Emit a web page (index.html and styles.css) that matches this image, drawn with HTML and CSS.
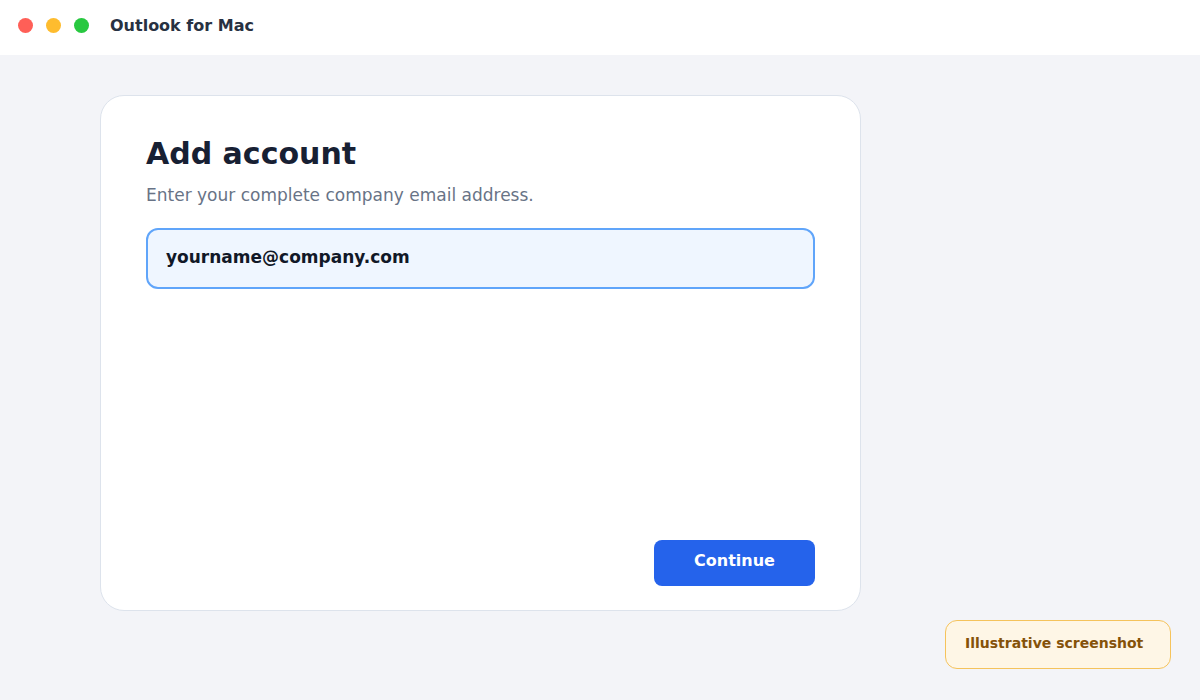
FILE: index.html
```html
<!DOCTYPE html>
<html>
<head>
<meta charset="utf-8">
<link rel="stylesheet" href="styles.css">
</head>
<body>
<header class="titlebar">
  <div class="lights">
    <span class="light red"></span>
    <span class="light yellow"></span>
    <span class="light green"></span>
  </div>
  <div class="app-title">Outlook for Mac</div>
</header>
<main class="stage">
  <section class="card">
    <h1 class="heading">Add account</h1>
    <p class="sub">Enter your complete company email address.</p>
    <div class="field">yourname@company.com</div>
    <div class="actions">
      <button class="btn">Continue</button>
    </div>
  </section>
  <div class="badge">Illustrative screenshot</div>
</main>
</body>
</html>
```

FILE: styles.css
```css
* { box-sizing: border-box; }
html, body { margin: 0; padding: 0; }
body {
  width: 1200px;
  height: 700px;
  overflow: hidden;
  font-family: "DejaVu Sans", "Liberation Sans", sans-serif;
  background: #f3f4f8;
}
.titlebar {
  height: 55px;
  background: #ffffff;
  display: flex;
  align-items: center;
  padding-left: 18px;
}
.lights {
  display: flex;
  gap: 13px;
  margin-top: -5px;
}
.light {
  width: 15px;
  height: 15px;
  border-radius: 50%;
  display: block;
}
.red { background: #ff5f57; }
.yellow { background: #febc2e; }
.green { background: #28c840; }
.app-title {
  margin-left: 21px;
  margin-top: -4px;
  font-size: 16px;
  font-weight: bold;
  color: #273142;
}
.stage {
  position: relative;
  height: 645px;
  padding: 40px 0 0 100px;
}
.card {
  width: 761px;
  height: 516px;
  background: #ffffff;
  border: 1px solid #dde3ec;
  border-radius: 24px;
  padding: 35px 45px 24px 45px;
  display: flex;
  flex-direction: column;
}
.heading {
  margin: 0;
  font-size: 30px;
  line-height: 46px;
  font-weight: bold;
  color: #172033;
}
.sub {
  margin: 7px 0 0 0;
  font-size: 17px;
  line-height: 22px;
  color: #687386;
}
.field {
  margin-top: 22px;
  height: 61px;
  border: 2px solid #60a5fa;
  border-radius: 12px;
  background: #eff6ff;
  padding: 0 18px;
  display: flex;
  align-items: center;
  font-size: 17px;
  font-weight: bold;
  color: #111827;
  padding-bottom: 3px;
}
.actions {
  margin-top: auto;
  display: flex;
  justify-content: flex-end;
}
.btn {
  width: 161px;
  height: 46px;
  border: none;
  border-radius: 8px;
  background: #2563eb;
  color: #ffffff;
  font-family: inherit;
  font-size: 16px;
  font-weight: bold;
  padding: 0 0 6px 0;
}
.badge {
  position: absolute;
  right: 29px;
  bottom: 31px;
  width: 226px;
  height: 49px;
  background: #fef6e6;
  border: 1px solid #f5c35c;
  border-radius: 12px;
  padding-left: 19px;
  padding-bottom: 4px;
  display: flex;
  align-items: center;
  font-size: 14px;
  font-weight: bold;
  color: #855209;
}
```
